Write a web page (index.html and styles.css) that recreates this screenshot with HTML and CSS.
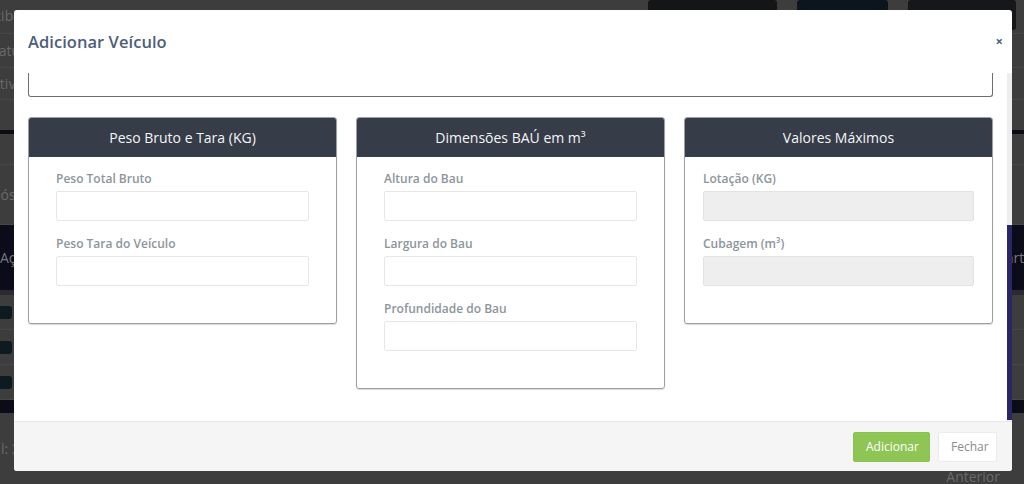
FILE: index.html
```html
<!DOCTYPE html>
<html lang="pt-BR">
<head>
<meta charset="utf-8">
<title>Adicionar Veículo</title>
<link rel="stylesheet" href="styles.css">
</head>
<body>
<div class="page">
  <div class="bg-row top">
    <span class="bg-text cut-exibir">Exibir Filtros</span>
    <div class="bg-actions">
      <span class="bg-btn b1"></span>
      <span class="bg-btn b2"></span>
      <span class="bg-btn b3"></span>
    </div>
  </div>
  <div class="bg-row r34"><span class="bg-text cut-status">Status</span></div>
  <div class="bg-row r32"><span class="bg-text cut-ativo">Ativo</span></div>
  <div class="bg-row r30"></div>
  <div class="bg-dark"></div>
  <div class="bg-row r31"></div>
  <div class="bg-row r60"><span class="bg-text cut-posto">Depósito</span></div>
  <div class="bg-head"><span class="bg-text light">Ações</span><span class="bg-text light cut-right">Partida</span></div>
  <div class="bg-line"><span class="bg-edit"></span></div>
  <div class="bg-line"><span class="bg-edit"></span></div>
  <div class="bg-line"><span class="bg-edit"></span></div>
  <div class="bg-dark2"></div>
  <div class="bg-row foot"><span class="bg-text cut-total">Total: 3</span><span class="bg-text pager">Anterior</span></div>
</div>

<div class="overlay">
  <div class="modal">
    <div class="modal-header">
      <h4 class="modal-title">Adicionar Veículo</h4>
      <span class="close">×</span>
    </div>
    <div class="modal-body">
      <div class="scroll">
        <div class="cut-box"></div>
        <div class="panels">
          <div class="panel">
            <div class="panel-head">Peso Bruto e Tara (KG)</div>
            <div class="panel-body">
              <div class="group"><label>Peso Total Bruto</label><input class="field" type="text"></div>
              <div class="group"><label>Peso Tara do Veículo</label><input class="field" type="text"></div>
            </div>
          </div>
          <div class="panel">
            <div class="panel-head">Dimensões BAÚ em m³</div>
            <div class="panel-body">
              <div class="group"><label>Altura do Bau</label><input class="field" type="text"></div>
              <div class="group"><label>Largura do Bau</label><input class="field" type="text"></div>
              <div class="group"><label>Profundidade do Bau</label><input class="field" type="text"></div>
            </div>
          </div>
          <div class="panel">
            <div class="panel-head">Valores Máximos</div>
            <div class="panel-body wide">
              <div class="group"><label>Lotação (KG)</label><input class="field disabled" type="text" disabled></div>
              <div class="group"><label>Cubagem (m³)</label><input class="field disabled" type="text" disabled></div>
            </div>
          </div>
        </div>
      </div>
      <div class="scrollbar"></div>
    </div>
    <div class="modal-footer">
      <button class="btn btn-green">Adicionar</button>
      <button class="btn btn-white">Fechar</button>
    </div>
  </div>
</div>
</body>
</html>
```

FILE: styles.css
```css
* { box-sizing: border-box; }
html, body { margin: 0; padding: 0; }
body {
  width: 1024px;
  height: 484px;
  overflow: hidden;
  background: #3d3d3d;
  font-family: "Open Sans", "Liberation Sans", sans-serif;
  position: relative;
}

/* dimmed page behind the modal */
.page { display: flex; flex-direction: column; width: 1024px; overflow: hidden; }
.bg-row {
  display: flex;
  align-items: center;
  justify-content: space-between;
  background: #3d3d3d;
  border-bottom: 1px solid #474747;
}
.bg-row.top { height: 34px; align-items: flex-start; }
.bg-row.r34 { height: 34px; }
.bg-row.r32 { height: 32px; }
.bg-row.r30 { height: 30px; border-bottom: 0; }
.bg-row.r31 { height: 31px; }
.bg-row.r60 { height: 60px; }
.bg-row.foot { height: 71px; border-bottom: 0; align-items: flex-start; padding-top: 26px; }
.bg-text { color: #6a6a6a; font-size: 14px; white-space: nowrap; }
.bg-row.top .bg-text { padding-top: 6px; }
.bg-text.light { color: #77777f; }
.cut-exibir { margin-left: -14px; }
.cut-status { margin-left: -14px; }
.cut-ativo { margin-left: -9px; }
.cut-posto { margin-left: -26px; }
.cut-total { margin-left: -28px; }
.cut-right { margin-right: -20px; }
.pager { margin-top: 28px; margin-right: 24px; }
.bg-actions { display: flex; gap: 20px; margin-right: 8px; }
.bg-btn { display: block; height: 30px; border-radius: 3px; }
.bg-btn.b1 { width: 129px; background: #141516; }
.bg-btn.b2 { width: 91px; background: #0c141d; }
.bg-btn.b3 { width: 108px; background: #15171a; }
.bg-dark { height: 4px; background: #0c0c12; }
.bg-dark2 { height: 13px; background: #0c0b18; }
.bg-head {
  height: 70px;
  background: #0c0b1a;
  display: flex;
  align-items: center;
  justify-content: space-between;
  border-bottom: 5px solid #2a2a30;
}
.bg-line {
  height: 35px;
  background: #3d3d3d;
  border-bottom: 1px solid #474747;
  display: flex;
  align-items: center;
}
.bg-edit { width: 12px; height: 13px; background: #0d1a1f; border-radius: 0 3px 3px 0; }

/* modal */
.overlay { position: absolute; inset: 0; }
.modal {
  position: absolute;
  left: 14px;
  top: 10px;
  width: 998px;
  height: 461px;
  background: #fff;
  border-radius: 3px;
  display: flex;
  flex-direction: column;
  overflow: hidden;
}
.modal-header {
  height: 63px;
  flex: none;
  display: flex;
  align-items: center;
  justify-content: space-between;
  padding: 0 9px 0 14px;
}
.modal-title {
  margin: 0;
  font-size: 16.5px;
  font-weight: 600;
  color: #4e5e79;
  letter-spacing: 0.05px;
}
.close {
  color: #4e5e79;
  font-weight: 700;
  font-size: 13px;
  line-height: 1;
  margin-top: -1px;
}
.modal-body {
  flex: 1;
  display: flex;
  overflow: hidden;
}
.scroll {
  flex: 1;
  padding: 0 14px;
}
.scrollbar {
  width: 5px;
  flex: none;
  background: linear-gradient(#ededed 0, #ededed 152px, #2b2766 152px, #2b2766 347px, #ededed 347px);
}
.cut-box {
  height: 24px;
  border: 1px solid #6e6e6e;
  border-top: 0;
  border-radius: 0 0 3px 3px;
}
.panels {
  display: flex;
  gap: 19px;
  margin-top: 20px;
  align-items: flex-start;
}
.panel {
  width: 309px;
  border: 1px solid #9ca0a6;
  border-radius: 3px;
  overflow: hidden;
  box-shadow: 0 1px 1px rgba(0,0,0,0.15);
}
.panel-head {
  height: 39px;
  background: #363c48;
  color: #f4f5f7;
  font-size: 14px;
  display: flex;
  align-items: center;
  justify-content: center;
}
.panel-body {
  padding: 13px 27px 23px;
}
.panel-body.wide {
  padding-left: 18px;
  padding-right: 18px;
}
.group { display: flex; flex-direction: column; margin-bottom: 14px; }
.group label {
  font-size: 12px;
  font-weight: 600;
  color: #8c959c;
  line-height: 17px;
  margin-bottom: 4px;
}
.field {
  height: 30px;
  width: 100%;
  border: 1px solid #e7e7e7;
  border-radius: 2px;
  background: #fff;
  font: inherit;
  padding: 0 8px;
  outline: none;
}
.field.disabled { background: #eeeeee; border-color: #e2e2e2; }

.modal-footer {
  height: 50px;
  flex: none;
  background: #f5f5f5;
  border-top: 1px solid #e6e6e6;
  display: flex;
  align-items: center;
  justify-content: flex-end;
  gap: 8px;
  padding: 0 15px 0 0;
}
.btn {
  height: 30px;
  font-family: "Open Sans", "Liberation Sans", sans-serif;
  font-size: 12px;
  border-radius: 2px;
  padding: 0 12px;
  cursor: pointer;
}
.btn-green { background: #8fc555; border: 1px solid #8ac250; color: #fff; width: 77px; }
.btn-white { background: #fff; border: 1px solid #ececec; color: #8a8a8a; width: 59px; }
```
